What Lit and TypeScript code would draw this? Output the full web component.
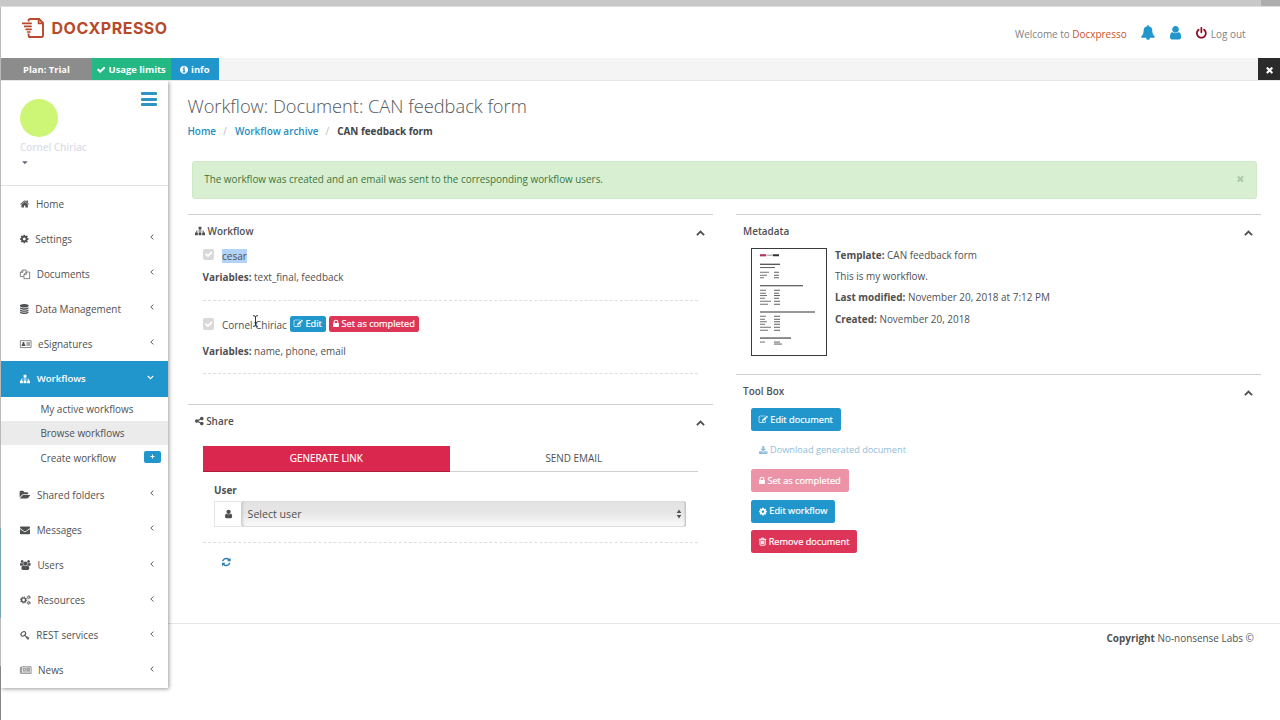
import { LitElement, html, css, svg, nothing } from "lit";

type Glyph = { x: number; w: number; d?: string; body?: unknown };

const GLYPHS: Record<string, Glyph> = {
  home: { x: 64, w: 1664, d: "M1472 992v480q0 26-19 45t-45 19h-384v-384h-256v384h-384q-26 0-45-19t-19-45v-480q0-1 .5-3t.5-3l575-474 575 474q1 2 1 6zm223-69l-62 74q-8 9-21 11h-3q-13 0-21-7l-692-577-692 577q-12 8-24 7-13-2-21-11l-62-74q-8-10-7-23.5t11-21.5l719-599q32-26 76-26t76 26l244 204v-195q0-14 9-23t23-9h192q14 0 23 9t9 23v408l219 182q10 8 11 21.5t-7 23.5z" },
  cog: { x: 128, w: 1536, d: "M1152 896q0-106-75-181t-181-75-181 75-75 181 75 181 181 75 181-75 75-181zm512-109v222q0 12-8 23t-20 13l-185 28q-19 54-39 91 35 50 107 138 10 12 10 25t-9 23q-27 37-99 108t-94 71q-12 0-26-9l-138-108q-44 23-91 38-16 136-29 186-7 28-36 28h-222q-14 0-24.5-8.5t-11.5-21.5l-28-184q-49-16-90-37l-141 107q-10 9-25 9-14 0-25-11-126-114-165-168-7-10-7-23 0-12 8-23 15-21 51-66.5t54-70.5q-27-50-41-99l-183-27q-13-2-21-12.5t-8-23.5v-222q0-12 8-23t19-13l186-28q14-46 39-92-40-57-107-138-10-12-10-24 0-10 9-23 26-36 98.5-107.5t94.5-71.5q13 0 26 10l138 107q44-23 91-38 16-136 29-186 7-28 36-28h222q14 0 24.5 8.5t11.5 21.5l28 184q49 16 90 37l142-107q9-9 24-9 13 0 25 10 129 119 165 170 7 8 7 22 0 12-8 23-15 21-51 66.5t-54 70.5q26 50 41 98l183 28q13 2 21 12.5t8 23.5z" },
  files: { x: 0, w: 1792, body: svg`<g fill="none" stroke="currentColor" stroke-width="125" stroke-linejoin="round"><path d="M640 1340H64V600L490 190H1090V500M500 190V600H64M704 1728V960L1130 540H1728V1728ZM1140 540V960H704"/></g>` },
  database: { x: 128, w: 1536, d: "M896 768q237 0 443-43t325-127v170q0 69-103 128t-280 93.500-385 34.500-385-34.500-280-93.500-103-128v-170q119 84 325 127t443 43zm0 768q237 0 443-43t325-127v170q0 69-103 128t-280 93.500-385 34.500-385-34.500-280-93.500-103-128v-170q119 84 325 127t443 43zm0-384q237 0 443-43t325-127v170q0 69-103 128t-280 93.500-385 34.500-385-34.500-280-93.500-103-128v-170q119 84 325 127t443 43zm0-1152q208 0 385 34.500t280 93.500 103 128v128q0 69-103 128t-280 93.500-385 34.500-385-34.500-280-93.500-103-128v-128q0-69 103-128t280-93.500 385-34.500z" },
  idcard: { x: 0, w: 2048, body: svg`<path fill="none" stroke="currentColor" stroke-width="120" d="M64 300H1984V1530H64Z"/><circle cx="620" cy="740" r="200"/><path d="M270 1270Q270 900 470 900H770Q970 900 970 1270ZM1150 620H1790V740H1150ZM1150 860H1790V980H1150ZM1150 1100H1790V1220H1150Z"/>` },
  sitemap: { x: 0, w: 1792, d: "M1792 1248v320q0 40-28 68t-68 28h-320q-40 0-68-28t-28-68v-320q0-40 28-68t68-28h96v-192h-512v192h96q40 0 68 28t28 68v320q0 40-28 68t-68 28h-320q-40 0-68-28t-28-68v-320q0-40 28-68t68-28h96v-192h-512v192h96q40 0 68 28t28 68v320q0 40-28 68t-68 28h-320q-40 0-68-28t-28-68v-320q0-40 28-68t68-28h96v-192q0-52 38-90t90-38h512v-192h-96q-40 0-68-28t-28-68v-320q0-40 28-68t68-28h320q40 0 68 28t28 68v320q0 40-28 68t-68 28h-96v192h512q52 0 90 38t38 90v192h96q40 0 68 28t28 68z" },
  folder: { x: 0, w: 1856, d: "M1815 952q0 31-31 66l-336 396q-43 51-120.500 86.500t-143.500 35.500h-1088q-34 0-60.500-13t-26.500-43q0-31 31-66l336-396q43-51 120.500-86.500t143.500-35.500h1088q34 0 60.500 13t26.500 43zm-343-344v160h-832q-94 0-197 47.500t-164 119.500l-337 396-5 6q0-4-.5-12.500t-.5-12.500v-960q0-92 66-158t158-66h320q92 0 158 66t66 158v32h544q92 0 158 66t66 158z" },
  envelope: { x: 0, w: 1792, d: "M1792 710v794q0 66-47 113t-113 47h-1472q-66 0-113-47t-47-113v-794q44 49 101 87 362 246 497 345 57 42 92.500 65.500t94.500 48 110 24.500h2q51 0 110-24.500t94.500-48 92.500-65.500q170-123 498-345 57-39 100-87zm0-294q0 79-49 151t-122 123q-376 261-468 325-10 7-42.500 31t-54 38.500-52 32.500-57.500 27-50 9h-2q-23 0-50-9t-57.500-27-52-32.500-54-38.500-42.500-31q-91-64-262-182.500t-205-142.500q-62-42-117-115.500t-55-136.500q0-78 41.500-130t118.500-52h1472q65 0 112.500 47t47.500 113z" },
  users: { x: 64, w: 1920, d: "M657 896q-162 5-265 128h-134q-82 0-138-40.500t-56-118.500q0-353 124-353 6 0 43.500 21t97.500 42.500 119 21.500q67 0 133-23-5 37-5 66 0 139 81 256zm1071 637q0 120-73 189.500t-194 69.500h-874q-121 0-194-69.500t-73-189.500q0-53 3.500-103.500t14-109 26.500-108.500 43-97.500 62-81 85.500-53.500 111.500-20q10 0 43 21.500t73 48 107 48 135 21.500 135-21.500 107-48 73-48 43-21.500q61 0 111.500 20t85.500 53.500 62 81 43 97.500 26.500 108.500 14 109 3.500 103.500zm-1024-1277q0 106-75 181t-181 75-181-75-75-181 75-181 181-75 181 75 75 181zm704 384q0 159-112.500 271.500t-271.500 112.500-271.500-112.500-112.500-271.500 112.500-271.500 271.500-112.500 271.500 112.500 112.500 271.500zm576 225q0 78-56 118.500t-138 40.500h-134q-103-123-265-128 81-117 81-256 0-29-5-66 66 23 133 23 59 0 119-21.500t97.500-42.500 43.500-21q124 0 124 353zm-128-609q0 106-75 181t-181 75-181-75-75-181 75-181 181-75 181 75 75 181z" },
  cogs: { x: 0, w: 1920, body: svg`<g fill="none" stroke="currentColor"><circle cx="640" cy="896" r="375" stroke-width="250"/><circle cx="640" cy="896" r="560" stroke-width="170" stroke-dasharray="220 220"/><circle cx="1560" cy="400" r="190" stroke-width="160"/><circle cx="1560" cy="400" r="300" stroke-width="110" stroke-dasharray="157 157"/><circle cx="1560" cy="1400" r="190" stroke-width="160"/><circle cx="1560" cy="1400" r="300" stroke-width="110" stroke-dasharray="157 157"/></g>` },
  key: { x: 0, w: 1720, body: svg`<g fill="none" stroke="currentColor" stroke-width="190" stroke-linecap="round"><ellipse cx="590" cy="690" rx="470" ry="330" transform="rotate(-38 590 690)"/><path d="M860 960L1500 1580M1180 1420L1330 1240M1380 1620L1580 1400"/></g>` },
  newspaper: { x: 0, w: 2048, body: svg`<g fill="none" stroke="currentColor" stroke-width="110"><path d="M256 320H1990V1500H150Q60 1480 60 1380V450H256V1400M560 580H960V960H560ZM1120 560H1800M1120 760H1800M1120 960H1800M450 1240H1800"/></g>` },
  bell: { x: 64, w: 1664, d: "M912 1696q0-16-16-16-59 0-101.500-42.500t-42.500-101.500q0-16-16-16t-16 16q0 73 51.500 124.500t124.500 51.500q16 0 16-16zm816-288q0 52-38 90t-90 38h-448q0 106-75 181t-181 75-181-75-75-181h-448q-52 0-90-38t-38-90q50-42 91-88t85-119.500 74.500-158.500 50-206 19.500-260q0-152 117-282.500t307-158.500q-8-19-8-39 0-40 28-68t68-28 68 28 28 68q0 20-8 39 190 28 307 158.500t117 282.500q0 139 19.500 260t50 206 74.500 158.500 85 119.500 91 88z" },
  user: { x: 256, w: 1280, d: "M1536 1399q0 109-62.500 187t-150.500 78h-854q-88 0-150.500-78t-62.500-187q0-85 8.500-160.500t31.500-152 58.500-131 94-89 134.500-34.500q131 128 313 128t313-128q76 0 134.500 34.500t94 89 58.500 131 31.500 152 8.500 160.500zm-256-887q0 159-112.500 271.500t-271.500 112.500-271.500-112.500-112.500-271.500 112.500-271.500 271.500-112.500 271.500 112.500 112.500 271.500z" },
  power: { x: 128, w: 1536, d: "M1664 896q0 156-61 298t-164 245-245 164-298 61-298-61-245-164-164-245-61-298q0-182 80.500-343t226.500-270q43-32 95.500-25t83.500 50q32 42 24.500 94.500t-49.500 84.500q-98 74-151.500 181t-53.500 228q0 104 40.500 198.500t109.500 163.500 163.500 109.500 198.500 40.500 198.500-40.500 163.500-109.500 109.500-163.500 40.500-198.500q0-121-53.500-228t-151.500-181q-42-32-49.500-84.500t24.500-94.500q31-43 84-50t95 25q146 109 226.500 270t80.500 343zm-640-768v640q0 52-38 90t-90 38-90-38-38-90v-640q0-52 38-90t90-38 90 38 38 90z" },
  check: { x: 100, w: 1592, d: "M1671 566q0 40-28 68l-724 724-136 136q-28 28-68 28t-68-28l-136-136-362-362q-28-28-28-68t28-68l136-136q28-28 68-28t68 28l294 295 656-657q28-28 68-28t68 28l136 136q28 28 28 68z" },
  info: { x: 128, w: 1536, d: "M1152 1376v-160q0-14-9-23t-23-9h-96v-512q0-14-9-23t-23-9h-320q-14 0-23 9t-9 23v160q0 14 9 23t23 9h96v320h-96q-14 0-23 9t-9 23v160q0 14 9 23t23 9h448q14 0 23-9t9-23zm-128-896v-160q0-14-9-23t-23-9h-192q-14 0-23 9t-9 23v160q0 14 9 23t23 9h192q14 0 23-9t9-23zm640 416q0 209-103 385.500t-279.500 279.500-385.500 103-385.500-103-279.500-279.500-103-385.500 103-385.500 279.500-279.500 385.500-103 385.500 103 279.500 279.500 103 385.500z" },
  times: { x: 256, w: 1280, d: "M1490 1322q0 40-28 68l-136 136q-28 28-68 28t-68-28l-294-294-294 294q-28 28-68 28t-68-28l-136-136q-28-28-28-68t28-68l294-294-294-294q-28-28-28-68t28-68l136-136q28-28 68-28t68 28l294 294 294-294q28-28 68-28t68 28l136 136q28 28 28 68t-28 68l-294 294 294 294q28 28 28 68z" },
  lock: { x: 320, w: 1152, d: "M640 768h512v-192q0-106-75-181t-181-75-181 75-75 181v192zm832 96v576q0 40-28 68t-68 28h-960q-40 0-68-28t-28-68v-576q0-40 28-68t68-28h32v-192q0-184 132-316t316-132 316 132 132 316v192h32q40 0 68 28t28 68z" },
  pencil: { x: 64, w: 1728, d: "M888 1184l116-116-152-152-116 116v56h96v96h56zm440-720q-16-16-33 1l-350 350q-17 17-1 33t33-1l350-350q17-17 1-33zm80 594v190q0 119-84.500 203.500t-203.500 84.500h-832q-119 0-203.500-84.500t-84.500-203.500v-832q0-119 84.500-203.500t203.500-84.500h832q63 0 117 25 15 7 18 23 3 17-9 29l-49 49q-14 14-32 8-23-6-45-6h-832q-66 0-113 47t-47 113v832q0 66 47 113t113 47h832q66 0 113-47t47-113v-126q0-13 9-22l64-64q15-15 35-7t20 29zm-96-738l288 288-672 672h-288v-288zm444 132l-92 92-288-288 92-92q28-28 68-28t68 28l152 152q28 28 28 68t-28 68z" },
  share: { x: 128, w: 1536, d: "M1344 1024q133 0 226.500 93.500t93.500 226.500-93.500 226.500-226.500 93.500-226.500-93.500-93.500-226.500q0-12 2-34l-360-180q-92 86-218 86-133 0-226.500-93.500t-93.500-226.500 93.500-226.500 226.500-93.500q126 0 218 86l360-180q-2-22-2-34 0-133 93.500-226.500t226.500-93.500 226.500 93.500 93.500 226.500-93.500 226.500-226.500 93.500q-126 0-218-86l-360 180q2 22 2 34t-2 34l360 180q92-86 218-86z" },
  download: { x: 64, w: 1664, d: "M1344 1344q0-26-19-45t-45-19-45 19-19 45 19 45 45 19 45-19 19-45zm256 0q0-26-19-45t-45-19-45 19-19 45 19 45 45 19 45-19 19-45zm128-224v320q0 40-28 68t-68 28h-1472q-40 0-68-28t-28-68v-320q0-40 28-68t68-28h465l135 136q58 56 136 56t136-56l136-136h464q40 0 68 28t28 68zm-325-569q17 41-14 70l-448 448q-18 19-45 19t-45-19l-448-448q-31-29-14-70 17-39 59-39h256v-448q0-26 19-45t45-19h256q26 0 45 19t19 45v448h256q42 0 59 39z" },
  trash: { x: 192, w: 1408, body: svg`<g fill="none" stroke="currentColor" stroke-width="190"><path d="M192 450H1600M390 450V1500Q400 1600 490 1600H1302Q1400 1600 1402 1500V450M600 430L680 220H1112L1192 430M672 700V1380M896 700V1380M1120 700V1380"/></g>` },
  refresh: { x: 128, w: 1536, d: "M1639 1056q0 5-1 7-64 268-268 434.500t-478 166.500q-146 0-282.500-55t-243.500-157l-129 129q-19 19-45 19t-45-19-19-45v-448q0-26 19-45t45-19h448q26 0 45 19t19 45-19 45l-137 137q71 66 161 102t187 36q134 0 250-65t186-179q11-17 53-117 8-23 30-23h192q13 0 22.500 9.500t9.500 22.500zm25-800v448q0 26-19 45t-45 19h-448q-26 0-45-19t-19-45 19-45l138-138q-148-137-349-137-134 0-250 65t-186 179q-11 17-53 117-8 23-30 23h-199q-13 0-22.500-9.500t-9.500-22.500v-7q65-268 270-434.500t480-166.500q146 0 284 55.500t245 156.500l130-129q19-19 45-19t45 19 19 45z" },
};

const icon = (name: string, size = 10) => {
  const g = GLYPHS[name];
  return html`<svg class="icon" width=${(g.w / 1792) * size} height=${size} viewBox="${g.x} 0 ${g.w} 1792" fill="currentColor">${g.d ? svg`<path d=${g.d}></path>` : g.body}</svg>`;
};

const stroke = (cls: string, w: number, h: number, d: string, sw: number) =>
  html`<svg class=${cls} width=${w} height=${h} viewBox="0 0 ${w} ${h}" fill="none" stroke="currentColor" stroke-width=${sw}><path d=${d}></path></svg>`;

const TOP_ITEMS = [
  ["home", "Home"], ["cog", "Settings"], ["files", "Documents"], ["database", "Data Management"], ["idcard", "eSignatures"],
];
const LOWER_ITEMS = [
  ["folder", "Shared folders"], ["envelope", "Messages"], ["users", "Users"], ["cogs", "Resources"],
  ["key", "REST services"], ["newspaper", "News"],
];

/* Lines of the document preview: x, y, width, stroke weight */
const PREVIEW: [number, number, number, number][] = [
  [8, 15, 20, 1.1], [8, 18.3, 15, 0.8],
  [8, 23, 9, 0.7], [22, 23, 5, 0.8], [8, 26, 7, 0.7], [22, 26, 5, 0.8], [8, 28.5, 4, 0.7], [22, 28.5, 5, 0.8],
  [8, 36.5, 43, 1.1],
  [8, 41, 6, 0.7], [22, 41, 6, 0.8], [8, 44, 6, 0.7], [22, 44, 5, 0.8], [8, 46.3, 7, 0.7], [22, 46.3, 6, 0.8],
  [8, 49, 5, 0.7], [22, 49, 5, 0.8], [8, 52, 11, 0.7], [22, 52, 6, 0.8], [8, 55, 8, 0.7], [22, 55, 6, 0.8],
  [8, 62.8, 55, 1.1],
  [8, 67, 6, 0.7], [22, 67, 6, 0.8], [8, 70, 5, 0.7], [22, 70, 6, 0.8], [8, 72.5, 7, 0.7], [22, 72.5, 6, 0.8],
  [8, 75, 5, 0.7], [22, 75, 6, 0.8], [8, 78, 11, 0.7], [22, 78, 6, 0.8], [8, 81, 8, 0.7], [22, 81, 6, 0.8],
  [8, 88.8, 31, 1.1], [8, 92.8, 5, 0.7], [22, 92.8, 6, 0.8], [22, 94.8, 8, 0.8],
];

class AppRoot extends LitElement {
  static styles = css`
    :host {
      display: block; box-sizing: border-box; width: 1280px; height: 720px; overflow: hidden; background: #fff;
      font: 400 9.94px/14px "Open Sans", sans-serif; color: #4f5052; white-space: nowrap;
    }
    * { box-sizing: border-box; }
    .icon { display: block; flex: none; overflow: visible; }
    b { font-weight: 700; }
    .chrome { height: 7px; background: #c8c8c8; border-bottom: 1px solid #dedede; display: flex; justify-content: flex-end; }
    .chrome-end { width: 19px; background: #adadad; }
    .frame { display: flex; height: 713px; }
    .edge { width: 1px; background: linear-gradient(#b9b9b9 0 521px, #7ba3b7 521px 611px, #b9bcbf 611px 659px, #85868a 659px); flex: none; }
    .page { flex: 1; min-width: 0; display: flex; flex-direction: column; }
    header { height: 51px; flex: none; display: flex; align-items: center; padding: 2px 34.5px 0 20.5px; color: #808284; }
    .logo { display: flex; align-items: center; gap: 8px; margin: -11px auto 0 0; color: #b84a2b; }
    .logo-name { font: 700 16px/20px Inter, "Open Sans", sans-serif; letter-spacing: 0.5px; }
    .logo svg, .cursor { display: block; }
    .brand { color: #cc5226; }
    .welcome { margin-right: 14.5px; }
    .blue { color: #2196cc; }
    .bell { margin: -2px 15px 0 0; }
    .person { margin: -2px 15px 0 0; }
    .power { color: #8b0f29; margin-right: 4px; }
    .bar { height: 23px; flex: none; display: flex; background: #f4f4f4; border-bottom: 1px solid #e6e6e6; color: #fff; font-weight: 700; font-size: 9.4px; }
    .bar > div { height: 22px; display: flex; align-items: center; justify-content: center; gap: 3px; padding-top: 1px; }
    .plan { width: 91px; background: #8c8c8c; }
    .limits { width: 79px; background: #24b885; }
    .info { width: 47.5px; background: #2196cc; }
    .bar .close { width: 22.5px; margin: 0 0 0 auto; background: #2b2b2b; padding-left: 2px; }
    .body { display: flex; flex: 1; min-height: 0; }
    aside { width: 167.4px; height: 606.6px; flex: none; box-shadow: 1px 1px 4px rgba(0, 0, 0, 0.4); clip-path: inset(0 -8px -8px 0); }
    .profile { height: 105px; border-bottom: 1px solid #e3e3e3; padding: 17.5px 11.5px 0 19px; display: flex; justify-content: space-between; align-items: flex-start; }
    .avatar { width: 38.5px; height: 38.5px; border-radius: 50%; background: #cdf576; margin: 0 0 3px -0.4px; }
    .name { font-weight: 600; font-size: 9.88px; color: #dcdee8; }
    .profile svg { display: block; color: #5f6678; margin: 6.5px 0 0 2px; }
    .burger { width: 16px; height: 14px; margin-top: -6.5px; display: flex; flex-direction: column; justify-content: space-between; }
    .burger i { height: 3px; background: #2f93c4; border-radius: 1px; }
    .item { height: 35.1px; display: flex; align-items: center; gap: 6.7px; padding: 0 14.6px 0 19px; }
    .item .angle { margin: -3px 0 0 auto; }
    .item.active { background: #2196cc; color: #fff; font-weight: 600; font-size: 9.6px; }
    .item.active .angle { margin-right: 0; }
    .sub { padding-bottom: 7.6px; }
    .sub > div { height: 24.4px; display: flex; align-items: center; padding: 0 7.5px 0 39.4px; }
    .sub .current { background: #ebebeb; }
    .plus { margin: -2px 0 0 auto; width: 16.5px; height: 12px; border-radius: 2px; background: #2196cc; color: #fff; display: flex; align-items: center; justify-content: center; }
    main { flex: 1; min-width: 0; display: flex; flex-direction: column; }
    .heading { height: 79.6px; flex: none; padding: 12.9px 0 0 19px; }
    h1 { margin: 0; font-weight: 300; font-size: 18.25px; line-height: 24px; color: #55575a; }
    .crumbs { display: flex; margin-top: 6.1px; font-weight: 600; }
    .crumbs a { color: #2490c2; }
    .crumbs span { width: 18.8px; text-align: center; color: #b9bcc0; font-weight: 400; padding-right: 1px; }
    .crumbs b { color: #424446; font-size: 9.9px; }
    .alert { height: 38px; flex: none; margin: 0 23.4px 0 23.5px; padding: 0 11.5px 1px 11.3px; border: 1px solid #cfe8c5; border-radius: 3px; background: #d9efd2; color: #3c763d; font-size: 9.88px; display: flex; align-items: center; justify-content: space-between; }
    .alert .icon { color: #abc8a6; }
    .columns { display: flex; gap: 23px; height: 425.4px; flex: none; padding: 15.2px 18.6px 0 19.2px; border-bottom: 1px solid #e6e6e6; }
    .left { width: 525.5px; }
    .right { width: 525px; }
    section { border-top: 1px solid #cfcfd1; }
    .title { height: 32.4px; padding: 0 8.5px 0 7px; display: flex; align-items: center; gap: 3px; font-weight: 600; }
    .title .up { margin: 4.4px 0 0 auto; }
    .workflow { height: 189.8px; }
    .step { margin: 0 15px 0 15px; border-bottom: 1px dashed #dedede; }
    .step-head { display: flex; align-items: center; height: 17px; }
    .box { width: 11.5px; height: 11.5px; margin-right: 8px; background: #d9d9d9; border-radius: 2px; color: #fff; display: flex; align-items: center; justify-content: center; flex: none; }
    .first { height: 53.4px; }
    .first .vars { margin-top: 5.8px; }
    .first .box { margin-top: -2px; }
    .second { height: 73.2px; padding-top: 15px; }
    .second .who { padding-top: 1.6px; }
    .second .vars { margin-top: 11px; }
    .selected { background: #b3d2f7; }
    .who { position: relative; margin-right: 3px; }
    .cursor { position: absolute; left: 30px; top: -1.5px; color: #222; }
    .btn { display: flex; align-items: center; gap: 2.6px; border-radius: 2.5px; color: #fff; font-size: 9.2px; background: #2196cc; -webkit-text-stroke: 0.2px currentColor; }
    .btn.red { background: #dc3558; }
    .btn.small { height: 16.5px; padding: 0 4.3px; margin-right: 2.5px; }
    .tabs { display: flex; height: 26.5px; margin: 9px 15.5px 0 15px; text-align: center; line-height: 25.5px; }
    .tabs > div { flex: 1; border-bottom: 1.5px solid #cfcfcf; }
    .tabs .on { background: #d9274d; color: #fff; border-bottom: 1px solid #b01c3c; -webkit-text-stroke: 0.15px #fff; }
    .form { height: 70.7px; margin: 0 15px 0 15px; padding: 10.9px 12px 0 11.5px; border-bottom: 1px dashed #dedede; }
    .field { display: flex; margin-top: 4px; height: 26px; }
    .addon { width: 27px; border: 1px solid #e4e5e7; border-right: 0; display: flex; align-items: center; justify-content: center; }
    .select { flex: 1; display: flex; align-items: center; justify-content: space-between; padding: 0 4.5px 0 6.5px; font-size: 10.62px; border-radius: 3px; background: linear-gradient(#e3e3e3, #e6e6e6 45%, #fbfbfb); box-shadow: inset 3px 0 3px -1.5px #c6c6c6, inset -2px 0 2px -1px #b9b9b9, inset 0 -1px 0 #e2e2e2; }
    .refresh { color: #2a7db5; padding: 14px 0 0 34.5px; }
    .meta { height: 160.2px; }
    .meta-body { display: flex; gap: 8px; padding: 1px 0 0 14.8px; }
    .meta-lines { line-height: 21.35px; margin-top: -3.5px; }
    .preview { width: 76px; height: 107.5px; border: 1px solid #3b3b3b; display: block; flex: none; }
    .tools { padding: 1px 0 0 14.8px; display: flex; flex-direction: column; align-items: flex-start; gap: 7.6px; }
    .tools .btn { height: 22.9px; padding: 0 8px; }
    .tools .link { background: none; color: #8fbdda; -webkit-text-stroke: 0; }
    .tools .faded { background: #ec93a7; }
    footer { padding: 7.2px 26.2px 0 0; text-align: right; }
  `;

  private item([name, label]: string[]) {
    return html`<div class="item">${icon(name)}<span>${label}</span>${label === "Home" ? nothing : stroke("angle", 4, 6, "M3.4 .6L.8 3L3.4 5.4", 0.9)}</div>`;
  }

  private title(label: string, glyph?: string) {
    return html`<div class="title">${glyph ? icon(glyph) : nothing}<span>${label}</span>${stroke("up", 9, 6, "M.9 5.1L4.5 1.6L8.1 5.1", 1.9)}</div>`;
  }

  render() {
    return html`
      <div class="chrome"><div class="chrome-end"></div></div>
      <div class="frame">
        <div class="edge"></div>
        <div class="page">
          <header>
            <div class="logo">
              <svg width="22" height="20" viewBox="0 0 22 20" fill="none" stroke="currentColor">
                <path stroke-width="1.9" d="M6.6 3.6V2.6Q6.6 1 8.2 1H17L21 5V17.2Q21 19 19.4 19H8.2Q6.6 19 6.6 17.4V15.4"/>
                <path stroke-width="1.7" d="M16.6 1V5.4H21M0 5.3H9.8M2 8.4H9.8M3.4 11.4H9.8"/>
                <path stroke-width="1.5" d="M5 14H8.6"/>
              </svg>
              <span class="logo-name">DOCXPRESSO</span>
            </div>
            <span class="welcome">Welcome to <span class="brand">Docxpresso</span></span>
            <span class="blue bell">${icon("bell", 15)}</span>
            <span class="blue person">${icon("user", 15.5)}</span>
            <span class="power">${icon("power", 12.5)}</span>
            <span>Log out</span>
          </header>
          <div class="bar">
            <div class="plan">Plan: Trial</div>
            <div class="limits">${icon("check", 9.4)}<span>Usage limits</span></div>
            <div class="info">${icon("info", 9.4)}<span>info</span></div>
            <div class="close">${icon("times", 10)}</div>
          </div>
          <div class="body">
            <aside>
              <div class="profile">
                <div>
                  <div class="avatar"></div>
                  <div class="name">Cornel Chiriac</div>
                  <svg width="6" height="4" viewBox="0 0 6 4" fill="currentColor"><path d="M.2 .3H5.6L2.9 3.2Z"/></svg>
                </div>
                <div class="burger"><i></i><i></i><i></i></div>
              </div>
              ${TOP_ITEMS.map((i) => this.item(i))}
              <div class="item active">${icon("sitemap")}<span>Workflows</span>${stroke("angle", 7, 5, "M.8 1L3.5 3.7L6.2 1", 1.1)}</div>
              <div class="sub">
                <div>My active workflows</div>
                <div class="current">Browse workflows</div>
                <div>Create workflow<span class="plus">${stroke("icon", 5, 5, "M2.5 .5V4.5M.5 2.5H4.5", 1)}</span></div>
              </div>
              ${LOWER_ITEMS.map((i) => this.item(i))}
            </aside>
            <main>
              <div class="heading">
                <h1>Workflow: Document: CAN feedback form</h1>
                <div class="crumbs"><a>Home</a><span>/</span><a>Workflow archive</a><span>/</span><b>CAN feedback form</b></div>
              </div>
              <div class="alert"><span>The workflow was created and an email was sent to the corresponding workflow users.</span>${icon("times", 9.5)}</div>
              <div class="columns">
                <div class="left">
                  <section class="workflow">
                    ${this.title("Workflow", "sitemap")}
                    <div class="step first">
                      <div class="step-head"><span class="box">${icon("check", 8.5)}</span><span class="selected">cesar</span></div>
                      <div class="vars"><b>Variables:</b> text_final, feedback</div>
                    </div>
                    <div class="step second">
                      <div class="step-head">
                        <span class="box">${icon("check", 8.5)}</span>
                        <span class="who">Cornel Chiriac
                          <svg class="cursor" width="7" height="12" viewBox="0 0 7 12" fill="none" stroke="currentColor" stroke-width=".9"><path d="M1 .6Q3.5 .6 3.5 2V10Q3.5 11.4 1 11.4M6 .6Q3.5 .6 3.5 2M6 11.4Q3.5 11.4 3.5 10M2.3 7.8H4.7"/></svg>
                        </span>
                        <span class="btn small">${icon("pencil", 9.2)}Edit</span>
                        <span class="btn small red">${icon("lock", 9.2)}Set as completed</span>
                      </div>
                      <div class="vars"><b>Variables:</b> name, phone, email</div>
                    </div>
                  </section>
                  <section>
                    ${this.title("Share", "share")}
                    <div class="tabs"><div class="on">GENERATE LINK</div><div>SEND EMAIL</div></div>
                    <div class="form">
                      <b>User</b>
                      <div class="field">
                        <div class="addon">${icon("user", 10)}</div>
                        <div class="select">Select user<svg width="6" height="10" viewBox="0 0 6 10" fill="currentColor"><path d="M3 .6L5.3 4H.7ZM3 9.4L5.3 6H.7Z"/></svg></div>
                      </div>
                    </div>
                    <div class="refresh">${icon("refresh", 10)}</div>
                  </section>
                </div>
                <div class="right">
                  <section class="meta">
                    ${this.title("Metadata")}
                    <div class="meta-body">
                      <svg class="preview" viewBox="0 0 74 105">
                        <path d="M8 6H14" stroke="#b3375a" stroke-width="2.2"/><path d="M14.500 6H21" stroke="#b9b9b9" stroke-width="1.500"/><path d="M21 6H27" stroke="#333" stroke-width="2"/>
                        ${PREVIEW.map(([x, y, w, s]) => svg`<path d="M${x} ${y}h${w}" stroke="#333" stroke-width=${s}></path>`)}
                      </svg>
                      <div class="meta-lines">
                        <div><b>Template:</b> CAN feedback form</div>
                        <div>This is my workflow.</div>
                        <div><b>Last modified:</b> November 20, 2018 at 7:12 PM</div>
                        <div><b>Created:</b> November 20, 2018</div>
                      </div>
                    </div>
                  </section>
                  <section>
                    ${this.title("Tool Box")}
                    <div class="tools">
                      <span class="btn">${icon("pencil", 9.2)}Edit document</span>
                      <span class="btn link">${icon("download", 9.2)}Download generated document</span>
                      <span class="btn faded">${icon("lock", 9.2)}Set as completed</span>
                      <span class="btn">${icon("cog", 9.2)}Edit workflow</span>
                      <span class="btn red">${icon("trash", 9.2)}Remove document</span>
                    </div>
                  </section>
                </div>
              </div>
              <footer><b>Copyright</b> No-nonsense Labs ©</footer>
            </main>
          </div>
        </div>
      </div>`;
  }
}

customElements.define("app-root", AppRoot);
